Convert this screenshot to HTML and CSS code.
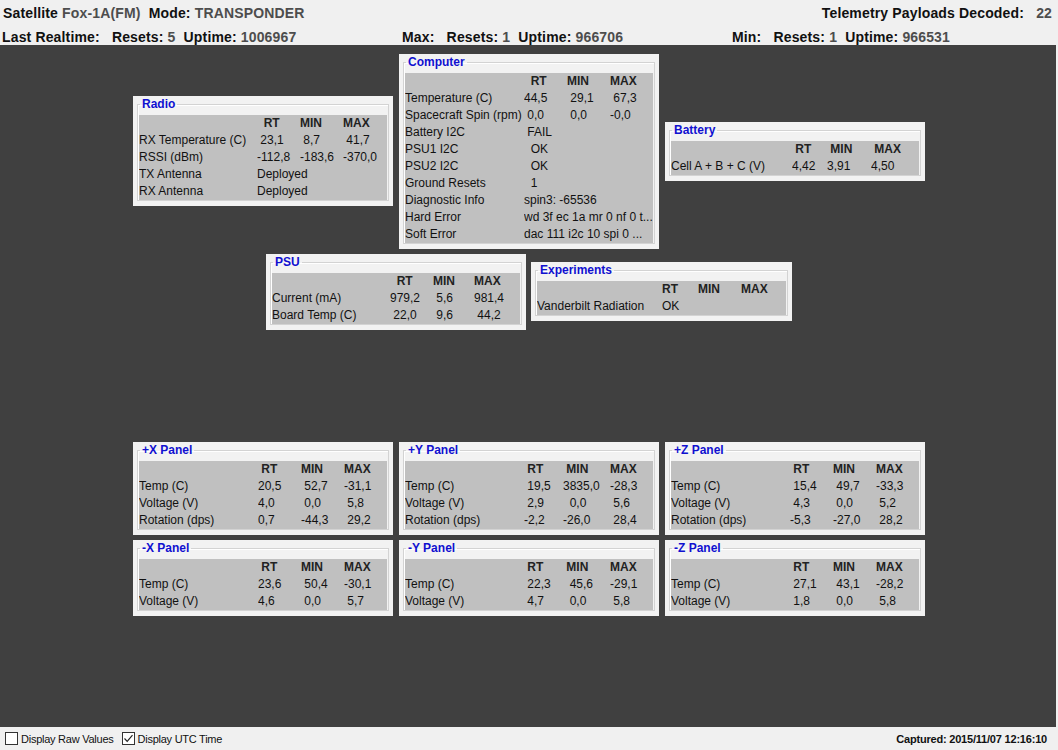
FILE: index.html
```html
<!DOCTYPE html>
<html>
<head>
<meta charset="utf-8">
<title>Fox-1A Telemetry</title>
<link rel="stylesheet" href="styles.css">
</head>
<body>
<header class="top">
  <div class="line1">
    <div class="hgroup"><span class="lbl">Satellite </span><span class="val">Fox-1A(FM)</span><span class="lbl">  Mode: </span><span class="val">TRANSPONDER</span></div>
    <div class="hgroup"><span class="lbl">Telemetry Payloads Decoded:   </span><span class="val">22</span></div>
  </div>
  <div class="line2">
    <div class="hgroup"><span class="lbl">Last Realtime:   Resets: </span><span class="val">5</span><span class="lbl">  Uptime: </span><span class="val">1006967</span></div>
    <div class="hgroup"><span class="lbl">Max:   Resets: </span><span class="val">1</span><span class="lbl">  Uptime: </span><span class="val">966706</span></div>
    <div class="hgroup"><span class="lbl">Min:   Resets: </span><span class="val">1</span><span class="lbl">  Uptime: </span><span class="val">966531</span></div>
  </div>
</header>

<main class="canvas">
  <div class="row row-a">
    <section class="panel radio">
      <fieldset class="frame">
        <legend class="title">Radio</legend>
        <div class="tbl">
          <span></span><span class="h">  RT</span><span class="h">MIN</span><span class="h">MAX</span>
          <span>RX Temperature (C)</span><span> 23,1</span><span> 8,7</span><span> 41,7</span>
          <span>RSSI (dBm)</span><span>-112,8</span><span>-183,6</span><span>-370,0</span>
          <span>TX Antenna</span><span class="span">Deployed</span>
          <span>RX Antenna</span><span class="span">Deployed</span>
        </div>
      </fieldset>
    </section>

    <section class="panel computer">
      <fieldset class="frame">
        <legend class="title">Computer</legend>
        <div class="tbl">
          <span></span><span class="h">  RT</span><span class="h">MIN</span><span class="h">MAX</span>
          <span>Temperature (C)</span><span>44,5</span><span> 29,1</span><span> 67,3</span>
          <span>Spacecraft Spin (rpm)</span><span> 0,0</span><span> 0,0</span><span>-0,0</span>
          <span>Battery I2C</span><span class="span"> FAIL</span>
          <span>PSU1 I2C</span><span class="span">  OK</span>
          <span>PSU2 I2C</span><span class="span">  OK</span>
          <span>Ground Resets</span><span class="span">  1</span>
          <span>Diagnostic Info</span><span class="span">spin3: -65536</span>
          <span>Hard Error</span><span class="span">wd 3f ec 1a mr 0 nf 0 t...</span>
          <span>Soft Error</span><span class="span">dac 111 i2c 10 spi 0 ...</span>
        </div>
      </fieldset>
    </section>

    <section class="panel battery">
      <fieldset class="frame">
        <legend class="title">Battery</legend>
        <div class="tbl">
          <span></span><span class="h"> RT</span><span class="h"> MIN</span><span class="h"> MAX</span>
          <span>Cell A + B + C (V)</span><span>4,42</span><span>3,91</span><span>4,50</span>
        </div>
      </fieldset>
    </section>
  </div>

  <div class="row row-b">
    <section class="panel psu">
      <fieldset class="frame">
        <legend class="title">PSU</legend>
        <div class="tbl">
          <span></span><span class="h">  RT</span><span class="h">MIN</span><span class="h">MAX</span>
          <span>Current (mA)</span><span>979,2</span><span> 5,6</span><span>981,4</span>
          <span>Board Temp (C)</span><span> 22,0</span><span> 9,6</span><span> 44,2</span>
        </div>
      </fieldset>
    </section>

    <section class="panel experiments">
      <fieldset class="frame">
        <legend class="title">Experiments</legend>
        <div class="tbl">
          <span></span><span class="h">RT</span><span class="h">MIN</span><span class="h">MAX</span>
          <span>Vanderbilt Radiation</span><span class="span">OK</span>
        </div>
      </fieldset>
    </section>
  </div>

  <div class="solar">
    <section class="panel">
      <fieldset class="frame">
        <legend class="title">+X Panel</legend>
        <div class="tbl">
          <span></span><span class="h"> RT</span><span class="h">MIN</span><span class="h">MAX</span>
          <span>Temp (C)</span><span>20,5</span><span> 52,7</span><span>-31,1</span>
          <span>Voltage (V)</span><span>4,0</span><span> 0,0</span><span> 5,8</span>
          <span>Rotation (dps)</span><span>0,7</span><span>-44,3</span><span> 29,2</span>
        </div>
      </fieldset>
    </section>

    <section class="panel ypanel">
      <fieldset class="frame">
        <legend class="title">+Y Panel</legend>
        <div class="tbl">
          <span></span><span class="h"> RT</span><span class="h"> MIN</span><span class="h">MAX</span>
          <span>Temp (C)</span><span> 19,5</span><span>3835,0</span><span>-28,3</span>
          <span>Voltage (V)</span><span> 2,9</span><span>  0,0</span><span> 5,6</span>
          <span>Rotation (dps)</span><span>-2,2</span><span>-26,0</span><span> 28,4</span>
        </div>
      </fieldset>
    </section>

    <section class="panel">
      <fieldset class="frame">
        <legend class="title">+Z Panel</legend>
        <div class="tbl">
          <span></span><span class="h"> RT</span><span class="h">MIN</span><span class="h">MAX</span>
          <span>Temp (C)</span><span> 15,4</span><span> 49,7</span><span>-33,3</span>
          <span>Voltage (V)</span><span> 4,3</span><span> 0,0</span><span> 5,2</span>
          <span>Rotation (dps)</span><span>-5,3</span><span>-27,0</span><span> 28,2</span>
        </div>
      </fieldset>
    </section>

    <section class="panel">
      <fieldset class="frame">
        <legend class="title">-X Panel</legend>
        <div class="tbl">
          <span></span><span class="h"> RT</span><span class="h">MIN</span><span class="h">MAX</span>
          <span>Temp (C)</span><span>23,6</span><span> 50,4</span><span>-30,1</span>
          <span>Voltage (V)</span><span>4,6</span><span> 0,0</span><span> 5,7</span>
        </div>
      </fieldset>
    </section>

    <section class="panel ypanel">
      <fieldset class="frame">
        <legend class="title">-Y Panel</legend>
        <div class="tbl">
          <span></span><span class="h"> RT</span><span class="h"> MIN</span><span class="h">MAX</span>
          <span>Temp (C)</span><span> 22,3</span><span>  45,6</span><span>-29,1</span>
          <span>Voltage (V)</span><span> 4,7</span><span>  0,0</span><span> 5,8</span>
        </div>
      </fieldset>
    </section>

    <section class="panel">
      <fieldset class="frame">
        <legend class="title">-Z Panel</legend>
        <div class="tbl">
          <span></span><span class="h"> RT</span><span class="h">MIN</span><span class="h">MAX</span>
          <span>Temp (C)</span><span> 27,1</span><span> 43,1</span><span>-28,2</span>
          <span>Voltage (V)</span><span> 1,8</span><span> 0,0</span><span> 5,8</span>
        </div>
      </fieldset>
    </section>
  </div>
</main>

<footer class="bottom">
  <div class="checks">
    <label class="chk"><span class="box"></span>Display Raw Values</label>
    <label class="chk"><span class="box"><svg viewBox="0 0 13 13" width="13" height="13"><path d="M2.5 6.5 L5.2 9.3 L10.5 3.2" fill="none" stroke="#222" stroke-width="1.2"/></svg></span>Display UTC Time</label>
  </div>
  <div class="captured">Captured: 2015/11/07 12:16:10</div>
</footer>
</body>
</html>
```

FILE: styles.css
```css
html, body {
  margin: 0;
  padding: 0;
}
body {
  width: 1058px;
  height: 750px;
  overflow: hidden;
  background: #f0f0f0;
  font-family: "Liberation Sans", Arial, sans-serif;
  display: flex;
  flex-direction: column;
}

/* ---------- header ---------- */
.top {
  height: 45px;
  flex: none;
  box-sizing: border-box;
  padding: 5px 6px 0 2px;
  font-weight: bold;
  font-size: 14px;
  line-height: 16px;
  letter-spacing: 0.15px;
}
.hgroup {
  white-space: pre;
}
.line1 {
  display: flex;
  justify-content: space-between;
  padding-left: 1px;
}
.line2 {
  margin-top: 8px;
  display: grid;
  grid-template-columns: 400px 330px auto;
}
.lbl { color: #111; }
.val { color: #4d4d4d; }

/* ---------- canvas ---------- */
.canvas {
  height: 682px;
  flex: none;
  margin-right: 2px;
  background: #404040;
  overflow: hidden;
}
.row {
  display: flex;
  align-items: flex-start;
}
.row-a {
  margin-top: 9px;
  padding-left: 133px;
  gap: 6px;
}
.row-a .radio { margin-top: 42px; }
.row-a .battery { margin-top: 68px; }
.row-b {
  margin-top: 5px;
  padding-left: 266px;
  gap: 5px;
}
.row-b .experiments { margin-top: 8px; width: 261px; }
.solar {
  margin-top: 112px;
  padding-left: 133px;
  display: grid;
  grid-template-columns: 260px 260px 260px;
  column-gap: 6px;
  row-gap: 5px;
  align-items: start;
}

/* ---------- panel ---------- */
.panel {
  width: 260px;
  box-sizing: border-box;
  background: #f2f2f2;
  padding: 1px 4px 5px 4px;
}
.frame {
  margin: 0;
  padding: 4px 1px 0 1px;
  border: 1px solid #d3d3d3;
  box-shadow: inset 1px 1px 0 #ffffff;
  min-width: 0;
}
.title {
  padding: 0 2px;
  margin-left: 1px;
  font-size: 12px;
  line-height: 14px;
  font-weight: bold;
  color: #1010d0;
}
.tbl {
  display: grid;
  grid-template-columns: 119px 43px 43px 1fr;
  grid-auto-rows: 17px;
  background: #c0c0c0;
  font-size: 12px;
  line-height: 17px;
  color: #111;
}
.tbl > span {
  white-space: pre;
  overflow: hidden;
}
.tbl .h {
  font-weight: bold;
  color: #222;
}
.tbl .span {
  grid-column: 2 / -1;
}
.battery .tbl { grid-template-columns: 121px 35px 44px 1fr; }
.psu .tbl { grid-template-columns: 118px 43px 41px 1fr; }
.experiments .tbl { grid-template-columns: 125px 36px 43px 1fr; }
.ypanel .tbl { grid-template-columns: 119px 39px 47px 1fr; }
.radio .tbl { grid-template-columns: 118px 43px 43px 1fr; }

/* ---------- bottom ---------- */
.bottom {
  height: 23px;
  flex: none;
  display: flex;
  align-items: center;
  justify-content: space-between;
  padding: 0 11px 0 5px;
}
.checks {
  display: flex;
  gap: 8px;
}
.chk {
  display: flex;
  align-items: center;
  gap: 3px;
  font-size: 11px;
  letter-spacing: -0.25px;
  color: #111;
}
.box {
  width: 13px;
  height: 13px;
  box-sizing: border-box;
  border: 1px solid #333;
  background: #fff;
  display: flex;
}
.box svg {
  margin: -1px;
}
.captured {
  font-size: 11px;
  font-weight: bold;
  letter-spacing: -0.2px;
  color: #111;
}
```
